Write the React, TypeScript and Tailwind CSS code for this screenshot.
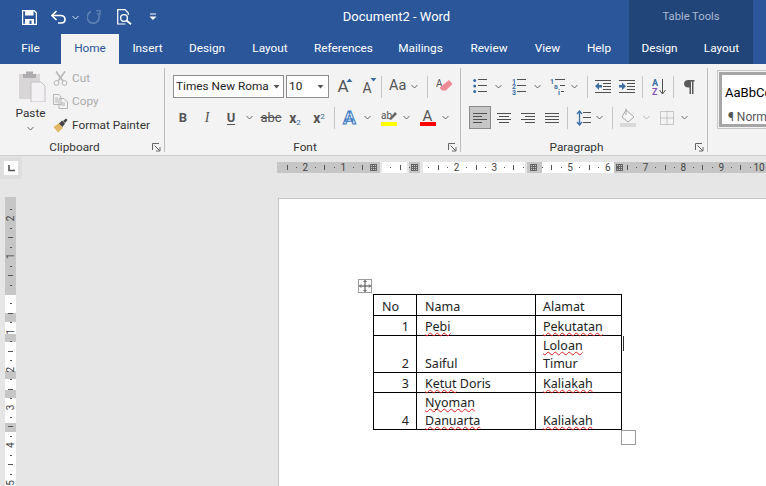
import { ReactNode } from 'react';

const INK = '#505050';
const BLUE = '#3a6ea5';

function Chev({ color = '#666', className = '' }: { color?: string; className?: string }) {
  return (
    <svg width="7" height="5" viewBox="0 0 7 5" className={`shrink-0 ${className}`}>
      <path d="M0.5 1 L3.5 4 L6.5 1" fill="none" stroke={color} strokeWidth="1" />
    </svg>
  );
}

function Sep() {
  return <div className="h-[22px] w-px bg-[#c6c6c6]" />;
}

function Cell({ w, children }: { w: number; children?: ReactNode }) {
  return (
    <div className="flex h-[23px] shrink-0 items-center justify-center" style={{ width: w }}>
      {children}
    </div>
  );
}

function Lines({ rows }: { rows: [number, number, number][] }) {
  return (
    <>
      {rows.map(([y, a, b], i) => (
        <path key={i} d={`M${a} ${y}.5 H${b}`} stroke={INK} strokeWidth="1" />
      ))}
    </>
  );
}

function Launcher() {
  return (
    <svg width="9" height="9" viewBox="0 0 9 9" className="absolute bottom-[3px] right-[3px]">
      <path d="M0.5 7 V0.5 H7" fill="none" stroke="#666" />
      <path d="M2.5 2.5 L7.5 7.5 M8 4 V8 H4" fill="none" stroke="#666" />
    </svg>
  );
}

function GroupLabel({ children }: { children: ReactNode }) {
  return (
    <div className="relative mt-auto flex h-[15px] items-center justify-center pr-[15px] text-[11.8px] leading-none text-[#333]">
      {children}
      <Launcher />
    </div>
  );
}

function TitleBar() {
  return (
    <div className="flex h-[34px] items-center">
      <div className="flex h-full w-[300px] items-center pl-[22px]">
        <svg width="15" height="15" viewBox="0 0 15 15">
          <path d="M0.5 0.5 H12 L14.5 3 V14.5 H0.5 Z" fill="none" stroke="#fff" strokeWidth="1.4" />
          <path d="M3 1 H11.5 V5.5 H3 Z M3 9 H12 V14 H3 Z" fill="#fff" />
          <path d="M7.5 10.5 H9.5 V14 H7.5 Z" fill="#2b579a" />
        </svg>
        <svg width="15" height="14" viewBox="0 0 15 14" className="ml-[14px]">
          <path d="M1 5.5 H9.5 C12.5 5.5 14 7.5 14 9.5 C14 11.5 12.5 13 10 13 H7" fill="none" stroke="#fff" strokeWidth="1.6" />
          <path d="M5.5 1 L1 5.5 L5.5 10" fill="none" stroke="#fff" strokeWidth="1.6" />
        </svg>
        <Chev color="#dfe6f1" className="ml-[6px]" />
        <svg width="14" height="14" viewBox="0 0 14 14" className="ml-[8px]">
          <path d="M10.5 3 A6 6 0 1 1 4 1.6" fill="none" stroke="#5d80b3" strokeWidth="1.7" />
          <path d="M9 0.5 H13 V5" fill="none" stroke="#5d80b3" strokeWidth="1.5" />
        </svg>
        <svg width="15" height="16" viewBox="0 0 15 16" className="ml-[16px]">
          <path d="M8.5 15 H0.7 V0.7 H8 L11.3 4 V6" fill="none" stroke="#fff" strokeWidth="1.2" />
          <circle cx="7" cy="9" r="3.4" fill="none" stroke="#fff" strokeWidth="1.4" />
          <path d="M9.5 11.5 L14 15.3" stroke="#fff" strokeWidth="1.8" />
        </svg>
        <svg width="8" height="8" viewBox="0 0 8 8" className="ml-[17px]">
          <path d="M1 1 H7" stroke="#fff" />
          <path d="M0.5 3.5 H7.5 L4 7 Z" fill="#fff" />
        </svg>
      </div>
      <div className="w-[193px] text-center text-[13px] text-white">Document2 - Word</div>
      <div className="ml-[136px] flex h-full w-[124px] items-center justify-center bg-[#224579] pt-[1px] text-[11.2px] text-[#a9b9d1]">
        Table Tools
      </div>
    </div>
  );
}

const tabs: [string, number][] = [
  ['File', 61],
  ['Home', 58],
  ['Insert', 57],
  ['Design', 62],
  ['Layout', 64],
  ['References', 83],
  ['Mailings', 71],
  ['Review', 66],
  ['View', 51],
  ['Help', 52],
];

function TabBar() {
  return (
    <div className="flex h-[30px] text-[11.8px] text-white">
      {tabs.map(([name, w]) => (
        <div
          key={name}
          style={{ width: w }}
          className={
            name === 'Home'
              ? 'flex items-center justify-center bg-[#f3f3f3] text-[#2b579a]'
              : 'flex items-center justify-center'
          }
        >
          {name}
        </div>
      ))}
      <div className="ml-[4px] flex w-[124px] bg-[#224579]">
        <div className="flex w-[61px] items-center justify-center">Design</div>
        <div className="flex w-[63px] items-center justify-center">Layout</div>
      </div>
    </div>
  );
}

function Clipboard() {
  return (
    <div className="flex h-full w-[164px] shrink-0 flex-col">
      <div className="flex">
        <div className="ml-[14px] mt-[7px] flex w-[33px] flex-col items-center">
          <svg width="30" height="31" viewBox="0 0 30 31">
            <path d="M3 3 H24 V28 H3 Z" fill="#d9d6d8" />
            <path d="M10 0.5 H17 V3 H20 V7 H7 V3 H10 Z" fill="#b0adb0" />
            <path d="M15 11 H25 L29 15 V31 H15 Z" fill="#f4f1f5" stroke="#c4c1c4" />
          </svg>
          <div className="mt-[4px] text-[11.8px] leading-[14px] text-[#333]">Paste</div>
          <Chev className="mt-[6px]" />
        </div>
        <div className="ml-[6px] mt-[3px] flex flex-col text-[11.8px] leading-[23px]">
          <div className="flex h-[23px] items-center gap-[4px] text-[#ababab]">
            <svg width="15" height="15" viewBox="0 0 15 15">
              <path d="M3 0.5 L10 10 M12 0.5 L5 10" stroke="#b5b5b5" strokeWidth="1.5" />
              <circle cx="3.5" cy="12" r="2.4" fill="none" stroke="#b5b5b5" />
              <circle cx="11.5" cy="12" r="2.4" fill="none" stroke="#b5b5b5" />
            </svg>
            Cut
          </div>
          <div className="flex h-[23px] items-center gap-[4px] text-[#ababab]">
            <svg width="15" height="15" viewBox="0 0 15 15">
              <path d="M0.5 0.5 H6 L8 3 V10.5 H0.5 Z M6 4.5 H11 L14.5 8 V14.5 H6 Z" fill="#f3f3f3" stroke="#b5b5b5" />
              <path d="M2 4 H5 M2 6 H5 M2 8 H5 M8 9 H12 M8 11 H12" stroke="#b5b5b5" />
            </svg>
            Copy
          </div>
          <div className="flex h-[24px] items-center gap-[4px] text-[#333]">
            <svg width="15" height="15" viewBox="0 0 15 15">
              <path d="M0.5 9 L6 5 L10 10 L5 14.5 Q3 12 0.5 9 Z" fill="#e2b868" />
              <path d="M6 5.5 L9 2.5 L12 5.5 L9.5 9 Z" fill="#444" />
              <path d="M10 3 L13 0.5 L14.5 2 L12 5" fill="#444" />
            </svg>
            Format Painter
          </div>
        </div>
      </div>
      <GroupLabel>Clipboard</GroupLabel>
    </div>
  );
}

function Combo({ w, text }: { w: number; text: string }) {
  return (
    <div className="flex h-[23px] shrink-0 items-center border border-[#8e8e8e] bg-white pl-[2px]" style={{ width: w }}>
      <span className="flex-1 whitespace-nowrap text-[11.8px] text-[#222]">{text}</span>
      <svg width="7" height="4" viewBox="0 0 7 4" className="mx-[4px] shrink-0">
        <path d="M0.5 0 H6.5 L3.5 3.5 Z" fill="#555" />
      </svg>
    </div>
  );
}

function BigA({ up }: { up: boolean }) {
  return (
    <div className="relative flex w-[24px] justify-center">
      <span className={up ? 'text-[17px] leading-none text-[#555]' : 'mt-[3px] text-[14px] leading-none text-[#555]'}>A</span>
      <svg width="7" height="4" viewBox="0 0 7 4" className="absolute right-[2px] top-0">
        <path d={up ? 'M0.5 4 L3.5 0.5 L6.5 4 Z' : 'M0.5 0 L3.5 3.5 L6.5 0 Z'} fill={BLUE} />
      </svg>
    </div>
  );
}

function FontGroup() {
  return (
    <div className="flex h-full w-[295px] shrink-0 flex-col">
      <div className="ml-[8px] mt-[11px] flex items-center">
        <Combo w={111} text="Times New Roma" />
        <div className="w-[2px]" />
        <Combo w={43} text="10" />
        <div className="ml-[2px] flex h-[23px] items-center">
          <BigA up />
          <BigA up={false} />
          <div className="ml-[2px]"><Sep /></div>
          <span className="ml-[7px] text-[14.5px] leading-none text-[#555]">Aa</span>
          <Chev className="ml-[5px]" />
          <div className="ml-[9px]"><Sep /></div>
          <svg width="17" height="17" viewBox="0 0 17 17" className="ml-[8px]">
            <text x="0" y="9" fontSize="10" fill="#555" fontFamily="Roboto">A</text>
            <path d="M8 6 L13 2 L16.5 6 L10 12.5 L6 12.5 L3.5 10 Z" fill="#ef8a97" />
          </svg>
        </div>
      </div>
      <div className="ml-[6px] mt-[8px] flex items-center text-[#555]">
        <Cell w={24}><span className="text-[13px] font-bold">B</span></Cell>
        <Cell w={24}><span className="font-['Liberation_Serif'] text-[14px] italic">I</span></Cell>
        <Cell w={24}><span className="border-b border-[#555] text-[13px] font-bold leading-[13px]">U</span></Cell>
        <Cell w={13}><Chev /></Cell>
        <Cell w={30}><span className="text-[13px] leading-none line-through">abc</span></Cell>
        <Cell w={18}><span className="text-[14px] font-bold leading-none">x<sub className="text-[8px] font-normal text-[#3a6ea5]">2</sub></span></Cell>
        <Cell w={30}><span className="text-[14px] font-bold leading-none">x<sup className="text-[8px] font-normal text-[#3a6ea5]">2</sup></span></Cell>
        <Sep />
        <Cell w={29}><span className="text-[19px] font-bold leading-none text-[#dbe7f5] [-webkit-text-stroke:1px_#3f7cc2]">A</span></Cell>
        <Cell w={6}><Chev /></Cell>
        <div className="ml-[10px] flex w-[17px] flex-col items-center">
          <svg width="16" height="12" viewBox="0 0 16 12">
            <text x="0" y="9" fontSize="10" fill="#555" fontFamily="Roboto">ab</text>
            <path d="M8 9 L14 2 L16 4 L10 10 Z" fill="#666" />
          </svg>
          <div className="h-[4px] w-[16px] bg-[#ffff00]" />
        </div>
        <Cell w={18}><Chev /></Cell>
        <div className="ml-[4px] flex w-[17px] flex-col items-center">
          <span className="text-[15px] leading-[12px] text-[#555]">A</span>
          <div className="h-[4px] w-[16px] bg-[#ff0000]" />
        </div>
        <Cell w={18}><Chev /></Cell>
      </div>
      <GroupLabel>Font</GroupLabel>
    </div>
  );
}

function Digit({ x, y, children }: { x: number; y: number; children: ReactNode }) {
  return (
    <text x={x} y={y} fontSize="7" fontWeight="700" fill={BLUE} fontFamily="Roboto">
      {children}
    </text>
  );
}

function ListIcon({ kind }: { kind: 'bullet' | 'number' | 'multi' }) {
  return (
    <svg width="15" height="16" viewBox="0 0 15 16" className="block">
      {kind === 'bullet' && (
        <>
          <circle cx="1.7" cy="1.5" r="1.5" fill={BLUE} />
          <circle cx="1.7" cy="7" r="1.5" fill={BLUE} />
          <circle cx="1.7" cy="12.5" r="1.5" fill={BLUE} />
        </>
      )}
      {kind === 'number' && (
        <>
          <Digit x={0} y={4.5}>1</Digit>
          <Digit x={0} y={10}>2</Digit>
          <Digit x={0} y={15.5}>3</Digit>
        </>
      )}
      {kind === 'multi' && (
        <>
          <Digit x={0} y={4.5}>1</Digit>
          <Digit x={4} y={10}>a</Digit>
          <Digit x={8} y={15.5}>i</Digit>
        </>
      )}
      <Lines
        rows={
          kind === 'multi'
            ? [[0, 5, 15], [6, 10, 15], [12, 11, 14]]
            : [[0, 5, 14], [6, 5, 14], [12, 5, 14]]
        }
      />
    </svg>
  );
}

function IndentIcon({ out }: { out: boolean }) {
  return (
    <svg width="16" height="13" viewBox="0 0 16 13" className="block">
      <Lines rows={[[0, 0, 16], [3, 8, 16], [6, 8, 16], [9, 8, 16], [12, 0, 16]]} />
      <path d={out ? 'M0 6 L4 2.5 V5 H7 V7.5 H4 V10 Z' : 'M7 6.2 L3 2.5 V5 H0 V7.5 H3 V10 Z'} fill={BLUE} />
    </svg>
  );
}

function Align({ rows }: { rows: [number, number, number][] }) {
  return (
    <svg width="15" height="11" viewBox="0 0 15 11" className="block">
      <Lines rows={rows} />
    </svg>
  );
}

function Paragraph() {
  return (
    <div className="flex h-full w-[246px] shrink-0 flex-col">
      <div className="ml-[12px] mt-[11px] flex h-[23px] items-center">
        <ListIcon kind="bullet" />
        <Chev className="ml-[7px]" />
        <div className="ml-[10px]"><ListIcon kind="number" /></div>
        <Chev className="ml-[7px]" />
        <div className="ml-[9px]"><ListIcon kind="multi" /></div>
        <Chev className="ml-[6px]" />
        <div className="ml-[9px]"><Sep /></div>
        <div className="ml-[7px]"><IndentIcon out /></div>
        <div className="ml-[8px]"><IndentIcon out={false} /></div>
        <div className="ml-[7px]"><Sep /></div>
        <svg width="17" height="18" viewBox="0 0 17 18" className="ml-[9px] shrink-0">
          <text x="0" y="8" fontSize="9" fontWeight="700" fill={BLUE} fontFamily="Roboto">A</text>
          <text x="0" y="17" fontSize="9" fontWeight="700" fill="#8a4fb5" fontFamily="Roboto">Z</text>
          <path d="M10.5 1 V15 M7.5 12 L10.5 16 L13.5 12" fill="none" stroke={INK} />
        </svg>
        <div className="ml-[4px]"><Sep /></div>
        <svg width="11" height="14" viewBox="0 0 11 14" className="ml-[10px] shrink-0">
          <path d="M10.5 0 H4.5 C1.5 0 0 1.7 0 3.8 C0 6 1.5 7.6 4.5 7.6 H5.5 V14 H7 V1.5 H8 V14 H9.5 V1.5 H10.5 Z" fill="#5a5a5a" />
        </svg>
      </div>
      <div className="ml-[8px] mt-[8px] flex items-center">
        <div className="flex h-[23px] w-[22px] shrink-0 items-center justify-center border border-[#8a8a8a] bg-[#c6c6c6]">
          <Align rows={[[1, 0, 14], [4, 0, 9], [7, 0, 14], [10, 0, 9]]} />
        </div>
        <div className="ml-[6px]"><Align rows={[[1, 0, 14], [4, 2, 12], [7, 0, 14], [10, 2, 12]]} /></div>
        <div className="ml-[9px]"><Align rows={[[1, 0, 14], [4, 4, 14], [7, 0, 14], [10, 4, 14]]} /></div>
        <div className="ml-[9px]"><Align rows={[[1, 0, 14], [4, 0, 14], [7, 0, 14], [10, 0, 14]]} /></div>
        <div className="ml-[7px]"><Sep /></div>
        <svg width="15" height="16" viewBox="0 0 15 16" className="ml-[8px] shrink-0">
          <Lines rows={[[2, 7, 15], [7, 7, 15], [12, 7, 15]]} />
          <path d="M3.5 1 V15 M1 4 L3.5 1 L6 4 M1 12 L3.5 15 L6 12" fill="none" stroke={BLUE} strokeWidth="1.3" />
        </svg>
        <Chev className="ml-[5px]" />
        <div className="ml-[9px]"><Sep /></div>
        <svg width="16" height="19" viewBox="0 0 16 19" className="ml-[7px] shrink-0">
          <path d="M6 2 L14 9 L8 14 L2 9 Z" fill="#f8f8f8" stroke="#a8a8a8" />
          <path d="M6 0.5 V7" stroke="#a8a8a8" />
          <path d="M0 15 H16 V19 H0 Z" fill="#d9d9d9" />
        </svg>
        <Chev color="#b5b5b5" className="ml-[7px]" />
        <svg width="14" height="14" viewBox="0 0 14 14" className="ml-[10px] shrink-0">
          <path d="M0.5 0.5 H13.5 V13.5 H0.5 Z M7 0.5 V13.5 M0.5 7 H13.5" fill="none" stroke="#9c9c9c" strokeDasharray="1 1" />
        </svg>
        <Chev className="ml-[7px]" />
      </div>
      <GroupLabel>Paragraph</GroupLabel>
    </div>
  );
}

function Styles() {
  return (
    <div className="ml-[9px] mt-[6px] h-[59px] w-[60px] shrink-0 overflow-hidden border border-[#c6c6c6] p-[1px]">
      <div className="h-full w-[70px] whitespace-nowrap border-[3px] border-[#a6a6a6] bg-white pl-[3px]">
        <div className="mt-[10px] text-[13px] leading-[16px] text-black">AaBbCc</div>
        <div className="mt-[9px] pl-[3px] text-[12px] leading-[14px] text-[#555]">¶ Normal</div>
      </div>
    </div>
  );
}

function Ribbon() {
  return (
    <div className="flex h-[92px] overflow-hidden border-b border-[#cfcfcf] bg-[#f3f3f3]">
      <Clipboard />
      <div className="mt-[4px] h-[84px] w-px shrink-0 bg-[#bdbdbd]" />
      <FontGroup />
      <div className="mt-[4px] h-[84px] w-px shrink-0 bg-[#bdbdbd]" />
      <Paragraph />
      <div className="mt-[4px] h-[84px] w-px shrink-0 bg-[#bdbdbd]" />
      <Styles />
    </div>
  );
}

// ruler drawing, one unit is 37.8px
const UNIT = 37.8;
const hBands: [number, number, string][] = [
  [277, 103, '#c6c6c6'],
  [382, 25, '#fff'],
  [409, 11, '#c6c6c6'],
  [423, 102, '#fff'],
  [527, 15, '#c6c6c6'],
  [542, 72, '#fff'],
  [614, 152, '#c6c6c6'],
];
const hGrips = [373, 414, 533, 619];

function HRuler() {
  const marks = [];
  for (let q = -11; q < 44; q++) {
    const x = 381 + (q * UNIT) / 4;
    if (x < 279 || x > 766) continue;
    if (q % 4 === 0) {
      const n = Math.abs(q / 4);
      if (n === 0 || (n === 1 && q > 0) || n === 4) continue;
      marks.push(
        <text key={q} x={x} y="9" fontSize="10" textAnchor="middle" fill="#444" fontFamily="Roboto">
          {n}
        </text>,
      );
    } else if (q % 2 === 0) {
      marks.push(<path key={q} d={`M${Math.round(x)}.5 3 V8`} stroke="#555" />);
    } else {
      marks.push(<path key={q} d={`M${Math.round(x)}.5 5 V6`} stroke="#555" />);
    }
  }
  return (
    <svg width="766" height="11" viewBox="0 0 766 11" className="block">
      {hBands.map(([x, w, c]) => (
        <rect key={x} x={x} y="0" width={w} height="11" fill={c} />
      ))}
      {marks}
      {hGrips.map((x) => (
        <path
          key={x}
          d={`M${x - 3} 2.5 H${x + 4} M${x - 3} 4.5 H${x + 4} M${x - 3} 6.5 H${x + 4} M${x - 3} 8.5 H${x + 4} M${x - 2.5} 2 V9 M${x - 0.5} 2 V9 M${x + 1.5} 2 V9 M${x + 3.5} 2 V9`}
          stroke="#666"
          strokeWidth="1"
          fill="none"
        />
      ))}
    </svg>
  );
}

const vBands: [number, number, string][] = [
  [197, 98, '#c6c6c6'],
  [295, 18, '#fff'],
  [313, 9, '#c6c6c6'],
  [322, 12, '#fff'],
  [334, 8, '#c6c6c6'],
  [342, 29, '#fff'],
  [371, 8, '#c6c6c6'],
  [379, 11, '#fff'],
  [390, 8, '#c6c6c6'],
  [398, 25, '#fff'],
  [423, 9, '#c6c6c6'],
  [432, 54, '#fff'],
];

function VRuler() {
  const marks = [];
  for (let q = -9; q < 22; q++) {
    const y = 294 + (q * UNIT) / 4 - 197;
    if (q % 4 === 0) {
      if (q === 0) continue;
      marks.push(
        <text
          key={q}
          x="6"
          y={y + 3}
          fontSize="10"
          textAnchor="middle"
          fill="#444"
          fontFamily="Roboto"
          transform={`rotate(-90 6 ${y})`}
        >
          {Math.abs(q / 4)}
        </text>,
      );
    } else if (q % 2 === 0) {
      marks.push(<path key={q} d={`M3 ${Math.round(y)}.5 H8`} stroke="#555" />);
    } else {
      marks.push(<path key={q} d={`M5 ${Math.round(y)}.5 H7`} stroke="#555" />);
    }
  }
  return (
    <svg width="11" height="289" viewBox="0 0 11 289" className="block">
      {vBands.map(([y, h, c]) => (
        <rect key={y} x="0" y={y - 197} width="11" height={h} fill={c} />
      ))}
      {marks}
    </svg>
  );
}

function Spell({ children }: { children: ReactNode }) {
  return (
    <span className="underline decoration-[#e02020] decoration-wavy decoration-1 underline-offset-1 [text-decoration-skip-ink:none]">{children}</span>
  );
}

const td = 'border border-black px-[7px] align-bottom';
const tdName = 'border border-black pl-[8px] pr-[7px] align-bottom';

function DocTable() {
  return (
    <div className="relative w-[248px]">
      <div className="absolute left-[-15px] top-[-15px] flex h-[14px] w-[14px] items-center justify-center border border-[#9a9a9a] bg-white">
        <svg width="12" height="12" viewBox="0 0 12 12">
          <path d="M6 0.5 V11.5 M0.5 6 H11.5 M4.5 2 L6 0.5 L7.5 2 M4.5 10 L6 11.5 L7.5 10 M2 4.5 L0.5 6 L2 7.5 M10 4.5 L11.5 6 L10 7.5" fill="none" stroke="#444" />
        </svg>
      </div>
      <table className="w-[248px] table-fixed border-collapse text-[12.5px] leading-[16px] text-[#222]">
        <colgroup>
          <col className="w-[43px]" />
          <col className="w-[119px]" />
          <col className="w-[86px]" />
        </colgroup>
        <tbody>
          <tr className="h-[21px]">
            <td className={`${td} pl-[8px]`}>No</td>
            <td className={tdName}>Nama</td>
            <td className={td}>Alamat</td>
          </tr>
          <tr className="h-[20px]">
            <td className={`${td} text-right`}>1</td>
            <td className={tdName}><Spell>Pebi</Spell></td>
            <td className={td}><Spell>Pekutatan</Spell></td>
          </tr>
          <tr className="h-[37px]">
            <td className={`${td} text-right`}>2</td>
            <td className={tdName}>Saiful</td>
            <td className={td}>
              <div className="mb-[2px]"><Spell>Loloan</Spell></div>
              Timur
            </td>
          </tr>
          <tr className="h-[20px]">
            <td className={`${td} text-right`}>3</td>
            <td className={tdName}><Spell>Ketut</Spell> Doris</td>
            <td className={td}><Spell>Kaliakah</Spell></td>
          </tr>
          <tr className="h-[37px]">
            <td className={`${td} text-right`}>4</td>
            <td className={tdName}>
              <div className="mb-[2px]"><Spell>Nyoman</Spell></div>
              <Spell>Danuarta</Spell>
            </td>
            <td className={td}><Spell>Kaliakah</Spell></td>
          </tr>
        </tbody>
      </table>
      <div className="absolute left-[250px] top-[42px] h-[15px] w-px bg-[#333]" />
      <div className="absolute bottom-[-15px] right-[-15px] h-[15px] w-[15px] border border-[#9a9a9a] bg-white" />
    </div>
  );
}

export default function App() {
  return (
    <div className="h-[486px] w-[766px] overflow-hidden bg-[#e6e6e6] font-['Roboto','Open_Sans',sans-serif]">
      <div className="bg-[#2b579a]">
        <TitleBar />
        <TabBar />
      </div>
      <Ribbon />
      {/* ruler strip */}
      <div className="relative pt-[6px]">
        <HRuler />
        <div className="absolute left-0 top-[1px] flex h-[22px] w-[22px] items-center justify-center bg-[#dedede]">
          <div className="flex h-[14px] w-[14px] items-center justify-center bg-white">
            <svg width="7" height="7" viewBox="0 0 7 7">
              <path d="M1 0 V5.5 H7" fill="none" stroke="#555" strokeWidth="1.6" />
            </svg>
          </div>
        </div>
      </div>
      <div className="mt-[25px] flex">
        <div className="ml-[5px] mt-[-1px] w-[11px] shrink-0">
          <VRuler />
        </div>
        <div className="ml-[262px] h-[300px] flex-1 border-l border-t border-[#c6c6c6] bg-white pl-[94px] pt-[95px] font-['Noto_Sans',sans-serif]">
          <DocTable />
        </div>
      </div>
    </div>
  );
}
